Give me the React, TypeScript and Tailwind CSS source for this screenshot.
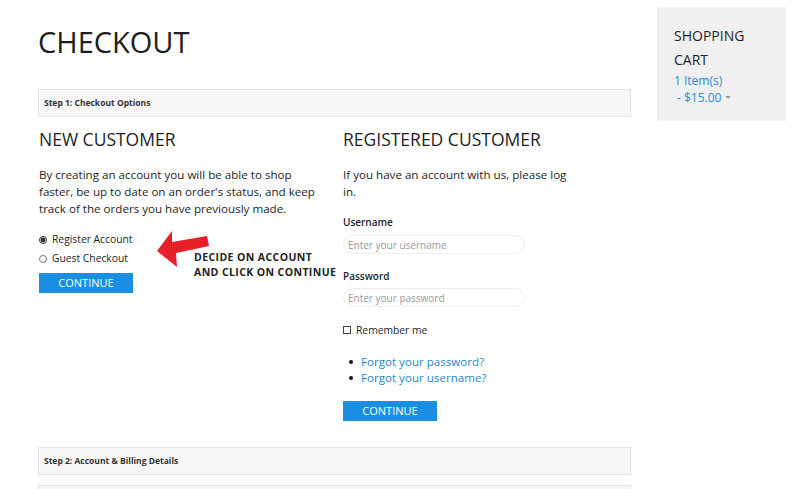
import { ChangeEvent } from "react";

const StepBar = ({ label }: { label: string }) => (
  <div className="h-[28px] border border-[#e6e6e6] bg-[#f7f7f7] px-[5px] flex items-center">
    <span className="text-[8.5px] font-bold text-[#333]">{label}</span>
  </div>
);

const BlueButton = () => (
  <button className="block w-[94px] h-[20px] bg-[#1a8ee0] text-white text-[11px] leading-[20px] text-center">
    CONTINUE
  </button>
);

const Arrow = () => (
  <svg width="60" height="42" viewBox="0 0 60 42" className="absolute left-[119px] top-[110px]">
    <polygon points="0,24 15,4 15,15 50,9 52,19 19,26 20,40" fill="#e8202a" />
  </svg>
);

const App = () => {
  const noop = (_: ChangeEvent<HTMLInputElement>) => {};

  return (
    <div className="flex h-[489px] bg-white font-['Open_Sans',sans-serif] text-[#1e1e1e] overflow-hidden">
      <main className="ml-[38px] w-[593px] shrink-0">
        <h1 className="mt-[24px] text-[29px] leading-[36px]">CHECKOUT</h1>

        <div className="mt-[29px]">
          <StepBar label="Step 1: Checkout Options" />
        </div>

        <div className="grid grid-cols-[305px_1fr]">
          {/* new customer */}
          <div className="relative pl-[1px]">
            <h2 className="mt-[10px] text-[17.5px] leading-[24px]">NEW CUSTOMER</h2>
            <p className="mt-[15px] w-[285px] text-[11.6px] leading-[17px]">
              By creating an account you will be able to shop faster, be up to date on an
              order's status, and keep track of the orders you have previously made.
            </p>
            <div className="mt-[13px] text-[10.3px] leading-[19px]">
              <label className="flex items-center gap-[5px]">
                <input type="radio" name="acc" checked onChange={noop} className="w-[8px] h-[8px] m-0 accent-[#333]" />
                Register Account
              </label>
              <label className="flex items-center gap-[5px]">
                <input type="radio" name="acc" className="w-[8px] h-[8px] m-0" />
                Guest Checkout
              </label>
            </div>
            <div className="mt-[5px]">
              <BlueButton />
            </div>

            <Arrow />
            <div className="absolute left-[156px] top-[133px] text-[10.5px] leading-[15px] font-bold tracking-[0.4px] text-[#222] whitespace-nowrap">
              DECIDE ON ACCOUNT
              <br />
              AND CLICK ON CONTINUE
            </div>
          </div>

          {/* registered customer */}
          <div>
            <h2 className="mt-[10px] text-[17.5px] leading-[24px]">REGISTERED CUSTOMER</h2>
            <p className="mt-[15px] w-[232px] text-[11.6px] leading-[17px]">
              If you have an account with us, please log in.
            </p>

            <div className="mt-[14px] text-[10px] leading-[16px] font-semibold">Username</div>
            <input
              placeholder="Enter your username"
              className="block mt-[5px] w-[182px] h-[19px] rounded-full border border-[#eeeeee] px-[4px] text-[10px] placeholder:text-[#9a9a9a] outline-none"
            />

            <div className="mt-[14px] text-[10px] leading-[16px] font-semibold">Password</div>
            <input
              type="password"
              placeholder="Enter your password"
              className="block mt-[4px] w-[182px] h-[19px] rounded-full border border-[#eeeeee] px-[4px] text-[10px] placeholder:text-[#9a9a9a] outline-none"
            />

            <label className="mt-[15px] flex items-center gap-[5px] text-[10.3px] leading-[16px]">
              <span className="w-[8px] h-[8px] border border-[#444] inline-block" />
              Remember me
            </label>

            <ul className="mt-[16px] pl-[6px] text-[11.6px] leading-[16px] text-[#1f86cc]">
              <li className="flex items-center gap-[8px]">
                <span className="w-[4px] h-[4px] rounded-full bg-[#111]" />
                Forgot your password?
              </li>
              <li className="flex items-center gap-[8px]">
                <span className="w-[4px] h-[4px] rounded-full bg-[#111]" />
                Forgot your username?
              </li>
            </ul>

            <div className="mt-[15px]">
              <BlueButton />
            </div>
          </div>
        </div>

        <div className="mt-[26px]">
          <StepBar label="Step 2: Account & Billing Details" />
        </div>
        <div className="mt-[10px] h-[28px] border border-[#e6e6e6] bg-[#f7f7f7]" />
      </main>

      <aside className="ml-[26px] mt-[7px] w-[129px] h-[114px] bg-[#f0f0f0] pl-[17px] pt-[17px] shrink-0">
        <div className="text-[14px] leading-[24px] text-[#1e1e1e]">
          SHOPPING
          <br />
          CART
        </div>
        <div className="text-[12px] leading-[17px] text-[#2a8ad2]">
          <div>1 Item(s)</div>
          <div className="flex items-center gap-[4px] pl-[3px]">
            - $15.00
            <span className="w-0 h-0 border-l-[3px] border-r-[3px] border-t-[3px] border-l-transparent border-r-transparent border-t-[#999]" />
          </div>
        </div>
      </aside>
    </div>
  );
};

export default App;
